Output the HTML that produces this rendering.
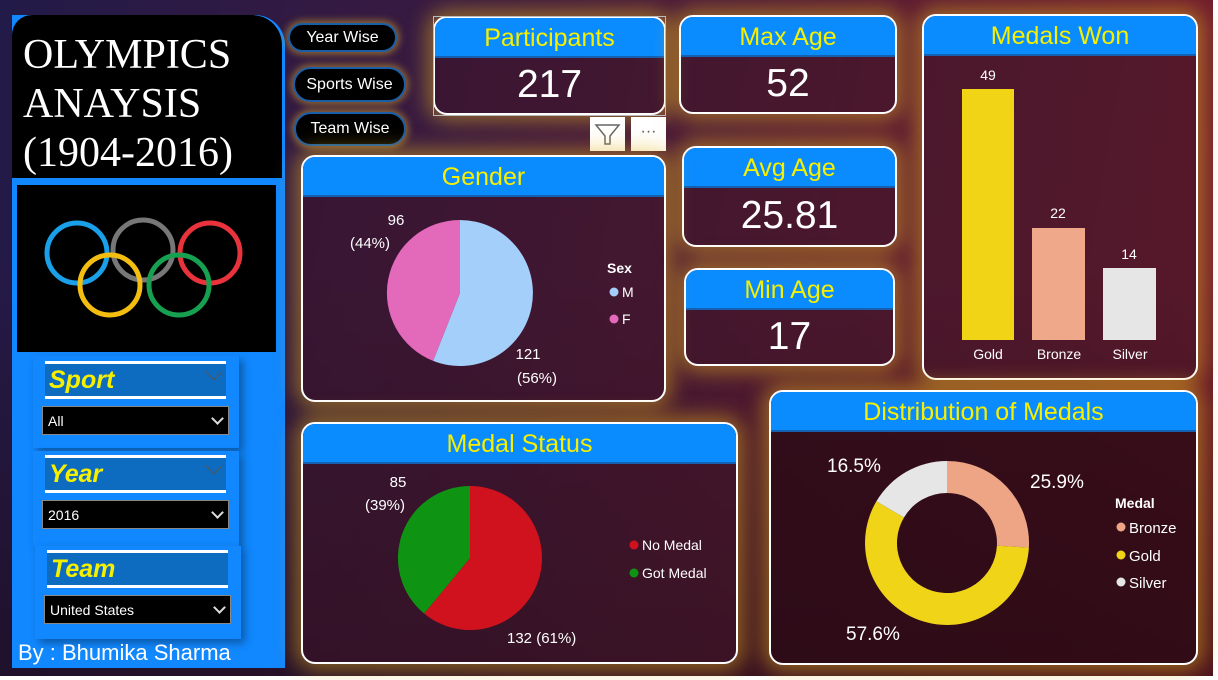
<!DOCTYPE html>
<html><head><meta charset="utf-8"><style>
*{margin:0;padding:0;box-sizing:border-box}
body{width:1218px;height:680px;overflow:hidden;font-family:"Liberation Sans",sans-serif;background:#fff;position:relative}
#bg{position:absolute;left:0;top:0;width:1213px;height:676px;background:linear-gradient(100deg,#221a48 0%,#3a1a40 35%,#5a1c34 65%,#7a1e2c 100%)}
#bg2{position:absolute;left:0;top:0;width:1213px;height:676px;background:linear-gradient(180deg,rgba(0,0,0,0) 40%,rgba(20,5,10,.45) 100%)}
.abs{position:absolute}
.card{position:absolute;border:2px solid #fff;border-radius:14px;overflow:hidden;background:rgba(60,20,40,.55);box-shadow:0 0 20px 6px rgba(230,180,30,.5)}
.hd{background:#0a8cff;color:#f6f000;text-align:center;font-size:25px;line-height:40px;height:40px;border-bottom:2px solid #1560b0}
.val{color:#fff;text-align:center;font-size:39px}
.btn{position:absolute;background:#000;border:2px solid #1a5ea8;border-radius:18px;color:#fff;font-size:16px;text-align:center;box-shadow:0 0 8px 2px rgba(220,170,40,.6)}
.sl{position:absolute;background:#1188ff;box-shadow:4px 4px 8px rgba(0,0,0,.35)}
.slh{position:absolute;background:#0d6bc0;border-top:3px solid #fff;border-bottom:3px solid #fff;color:#f6f000;font-style:italic;font-weight:bold;font-size:25px;padding-left:4px;line-height:32px}
.slh .c{position:absolute;right:6px;top:2px;width:12px;height:12px;border-right:1.5px solid #555;border-bottom:1.5px solid #555;transform:rotate(45deg)}
.dd{position:absolute;background:#000;border:1px solid #888;color:#fff;font-size:14px;padding-left:5px;line-height:28px}
.chev{position:absolute;right:6px;top:7px;width:9px;height:9px;border-right:2px solid #ddd;border-bottom:2px solid #ddd;transform:rotate(45deg)}
svg text{font-family:"Liberation Sans",sans-serif}
</style></head><body>
<div id="bg"></div><div id="bg2"></div>

<div class="abs" style="left:12px;top:15px;width:273px;height:653px;background:#1188ff;border-top-right-radius:30px"></div>
<div class="abs" style="left:12px;top:15px;width:270px;height:163px;background:#000;border-top-left-radius:20px;border-top-right-radius:30px;color:#fff;font-family:'Liberation Serif',serif;font-size:42px;line-height:49px;padding:16px 0 0 11px;white-space:nowrap">OLYMPICS<br>ANAYSIS<br>(1904-2016)</div>
<div class="abs" style="left:17px;top:185px;width:259px;height:167px;background:#000">
<svg width="259" height="167">
<g fill="none" stroke-width="5">
<circle cx="60" cy="68" r="30" stroke="#1aa0e8"/>
<circle cx="126" cy="65" r="30" stroke="#777"/>
<circle cx="193" cy="68" r="30" stroke="#e8323c"/>
<circle cx="93" cy="100" r="30" stroke="#f4be10"/>
<circle cx="162" cy="100" r="30" stroke="#16a050"/>
</g></svg></div>
<div class="sl" style="left:33px;top:356px;width:206px;height:92px"></div>
<div class="slh" style="left:45px;top:361px;width:181px;height:38px">Sport<div class="c"></div></div>
<div class="dd" style="left:42px;top:406px;width:187px;height:29px">All<div class="chev"></div></div>
<div class="sl" style="left:33px;top:451px;width:206px;height:95px"></div>
<div class="slh" style="left:45px;top:455px;width:181px;height:38px">Year<div class="c"></div></div>
<div class="dd" style="left:42px;top:500px;width:187px;height:29px">2016<div class="chev"></div></div>
<div class="sl" style="left:35px;top:546px;width:206px;height:93px"></div>
<div class="slh" style="left:47px;top:550px;width:181px;height:38px">Team</div>
<div class="dd" style="left:44px;top:595px;width:187px;height:29px">United States<div class="chev"></div></div>
<div class="abs" style="left:18px;top:640px;color:#fff;font-size:22px">By : Bhumika Sharma</div>

<div class="btn" style="left:288px;top:23px;width:109px;height:29px;line-height:25px">Year Wise</div>
<div class="btn" style="left:293px;top:67px;width:113px;height:35px;line-height:31px">Sports Wise</div>
<div class="btn" style="left:294px;top:112px;width:112px;height:34px;line-height:30px">Team Wise</div>

<div class="card" style="left:433px;top:16px;width:233px;height:99px"><div class="hd">Participants</div><div class="val" style="line-height:54px">217</div></div>
<div class="abs" style="left:590px;top:117px;width:35px;height:34px;background:#fff"><svg width="35" height="34"><path d="M6 8 H29 L20 19 V27 H15 V19 Z" fill="none" stroke="#666" stroke-width="1.5"/></svg></div>
<div class="abs" style="left:631px;top:117px;width:35px;height:34px;background:#fff;color:#555;text-align:center;font-size:16px;line-height:30px">···</div>
<div class="card" style="left:679px;top:15px;width:218px;height:99px"><div class="hd">Max Age</div><div class="val" style="line-height:54px">52</div></div>
<div class="card" style="left:682px;top:146px;width:215px;height:101px"><div class="hd">Avg Age</div><div class="val" style="line-height:56px">25.81</div></div>
<div class="card" style="left:684px;top:268px;width:211px;height:98px"><div class="hd">Min Age</div><div class="val" style="line-height:54px">17</div></div>

<div class="card" style="left:922px;top:14px;width:276px;height:366px"><div class="hd">Medals Won</div>
<svg class="abs" style="left:-2px;top:-2px" width="276" height="366" font-size="14" fill="#fff">
<rect x="40" y="75" width="52" height="251" fill="#f2d417"/>
<rect x="110" y="214" width="53" height="112" fill="#f0a88a"/>
<rect x="181" y="254" width="53" height="72" fill="#e6e6e6"/>
<text x="66" y="66" text-anchor="middle">49</text>
<text x="136" y="204" text-anchor="middle">22</text>
<text x="207" y="245" text-anchor="middle">14</text>
<text x="66" y="345" text-anchor="middle">Gold</text>
<text x="137" y="345" text-anchor="middle">Bronze</text>
<text x="208" y="345" text-anchor="middle">Silver</text>
</svg></div>

<div class="card" style="left:301px;top:155px;width:365px;height:247px"><div class="hd">Gender</div></div>
<div class="card" style="left:301px;top:422px;width:437px;height:242px"><div class="hd">Medal Status</div></div>
<div class="card" style="left:769px;top:390px;width:429px;height:275px;background:rgba(40,10,20,.75)"><div class="hd">Distribution of Medals</div></div>

<svg class="abs" style="left:0;top:0" width="1218" height="680" fill="#fff">
<path d="M460,293 L460,220 A73,73 0 1 1 433.1,360.9 Z" fill="#a4cffa"/>
<path d="M460,293 L433.1,360.9 A73,73 0 0 1 460,220 Z" fill="#e36abb"/>
<text x="396" y="225" font-size="15" text-anchor="middle">96</text>
<text x="370" y="248" font-size="15" text-anchor="middle">(44%)</text>
<text x="528" y="359" font-size="15" text-anchor="middle">121</text>
<text x="537" y="383" font-size="15" text-anchor="middle">(56%)</text>
<text x="607" y="273" font-size="14" font-weight="bold">Sex</text>
<circle cx="614" cy="292" r="4.5" fill="#a4cffa"/><text x="622" y="297" font-size="14">M</text>
<circle cx="614" cy="319" r="4.5" fill="#e36abb"/><text x="622" y="324" font-size="14">F</text>

<path d="M470,558 L470,486 A72,72 0 1 1 424.1,613.5 Z" fill="#d0121e"/>
<path d="M470,558 L424.1,613.5 A72,72 0 0 1 470,486 Z" fill="#0e9412"/>
<text x="398" y="487" font-size="15" text-anchor="middle">85</text>
<text x="385" y="510" font-size="15" text-anchor="middle">(39%)</text>
<text x="507" y="643" font-size="15">132 (61%)</text>
<circle cx="634" cy="545" r="4.5" fill="#d0121e"/><text x="642" y="550" font-size="14">No Medal</text>
<circle cx="634" cy="573" r="4.5" fill="#0e9412"/><text x="642" y="578" font-size="14">Got Medal</text>

<path d="M947,461 A82,82 0 0 1 1028.9,547.6 L996.9,545.8 A50,50 0 0 0 947,493 Z" fill="#eea586"/>
<path d="M1028.9,547.6 A82,82 0 1 1 876.4,501.3 L904,517.5 A50,50 0 1 0 996.9,545.8 Z" fill="#f0d418"/>
<path d="M876.4,501.3 A82,82 0 0 1 947,461 L947,493 A50,50 0 0 0 904,517.5 Z" fill="#e6e6e6"/>
<text x="827" y="472" font-size="19">16.5%</text>
<text x="1030" y="488" font-size="19">25.9%</text>
<text x="846" y="640" font-size="19">57.6%</text>
<text x="1115" y="508" font-size="14" font-weight="bold">Medal</text>
<circle cx="1121" cy="527" r="4.5" fill="#eea586"/><text x="1129" y="533" font-size="15">Bronze</text>
<circle cx="1121" cy="555" r="4.5" fill="#f0d418"/><text x="1129" y="561" font-size="15">Gold</text>
<circle cx="1121" cy="582" r="4.5" fill="#e6e6e6"/><text x="1129" y="588" font-size="15">Silver</text>
</svg>
<div class="abs" style="left:433px;top:16px;width:233px;height:100px;border:1px solid #bbb"></div>
</body></html>
